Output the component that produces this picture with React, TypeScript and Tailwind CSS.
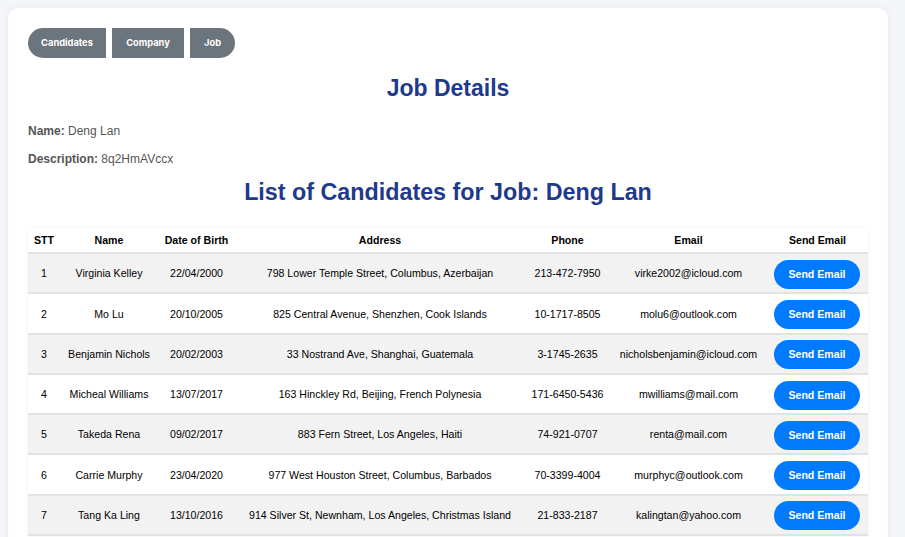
import React from "react";

const rows = [
  ["1", "Virginia Kelley", "22/04/2000", "798 Lower Temple Street, Columbus, Azerbaijan", "213-472-7950", "virke2002@icloud.com"],
  ["2", "Mo Lu", "20/10/2005", "825 Central Avenue, Shenzhen, Cook Islands", "10-1717-8505", "molu6@outlook.com"],
  ["3", "Benjamin Nichols", "20/02/2003", "33 Nostrand Ave, Shanghai, Guatemala", "3-1745-2635", "nicholsbenjamin@icloud.com"],
  ["4", "Micheal Williams", "13/07/2017", "163 Hinckley Rd, Beijing, French Polynesia", "171-6450-5436", "mwilliams@mail.com"],
  ["5", "Takeda Rena", "09/02/2017", "883 Fern Street, Los Angeles, Haiti", "74-921-0707", "renta@mail.com"],
  ["6", "Carrie Murphy", "23/04/2020", "977 West Houston Street, Columbus, Barbados", "70-3399-4004", "murphyc@outlook.com"],
  ["7", "Tang Ka Ling", "13/10/2016", "914 Silver St, Newnham, Los Angeles, Christmas Island", "21-833-2187", "kalingtan@yahoo.com"],
];

export default function App() {
  return (
    <div className="min-h-[537px] h-[537px] overflow-hidden bg-[#f4f5f9] p-2 font-['Liberation_Sans',Arial,sans-serif]">
      <div className="w-[880px] bg-white rounded-[10px] shadow-[0_0_6px_rgba(0,0,0,0.06)] px-5 pt-5 pb-5">
        <div className="flex gap-[6px] font-['Inter',sans-serif] text-[9.3px] font-bold text-white">
          <button className="h-[30px] w-[78px] bg-[#6c757d] rounded-l-full pb-px">Candidates</button>
          <button className="h-[30px] w-[72px] bg-[#6c757d] pb-px">Company</button>
          <button className="h-[30px] w-[45px] bg-[#6c757d] rounded-r-full pb-px">Job</button>
        </div>
        <h1 className="mt-4 text-center text-[23px] leading-[28px] font-bold text-[#1f3a8a]">Job Details</h1>
        <p className="mt-[21px] text-[12px] leading-[16px] text-[#555]">
          <span className="font-bold">Name:</span> Deng Lan
        </p>
        <p className="mt-3 text-[12px] leading-[16px] text-[#555]">
          <span className="font-bold">Description:</span> 8q2HmAVccx
        </p>
        <h2 className="mt-[11px] text-center text-[23.3px] leading-[28px] font-bold text-[#1f3a8a]">List of Candidates for Job: Deng Lan</h2>
        <table className="mt-[22px] w-[840px] table-fixed border-collapse text-[10.6px] text-black shadow-[0_0_4px_rgba(0,0,0,0.06)]">
          <colgroup>
            <col className="w-[32px]" />
            <col className="w-[98px]" />
            <col className="w-[77px]" />
            <col className="w-[290px]" />
            <col className="w-[85px]" />
            <col className="w-[157px]" />
            <col className="w-[101px]" />
          </colgroup>
          <thead>
            <tr className="h-[25px] border-b-2 border-[#e2e2e2]">
              <th className="font-bold pt-px">STT</th>
              <th className="font-bold pt-px">Name</th>
              <th className="font-bold pt-px">Date of Birth</th>
              <th className="font-bold pt-px">Address</th>
              <th className="font-bold pt-px">Phone</th>
              <th className="font-bold pt-px">Email</th>
              <th className="font-bold pt-px">Send Email</th>
            </tr>
          </thead>
          <tbody>
            {rows.map((r, i) => (
              <tr key={r[0]} className={`h-[40.3px] border-b-2 border-[#e2e2e2] ${i % 2 === 0 ? "bg-[#f2f2f2]" : "bg-white"}`}>
                {r.map((c, j) => (
                  <td key={j} className="text-center whitespace-nowrap pt-[2px]">{c}</td>
                ))}
                <td className="text-center pr-px pt-[2px]">
                  <button className="h-[29px] w-[86px] rounded-full bg-[#007bff] text-white font-bold text-[10.6px] pt-px">Send Email</button>
                </td>
              </tr>
            ))}
          </tbody>
        </table>
      </div>
    </div>
  );
}
